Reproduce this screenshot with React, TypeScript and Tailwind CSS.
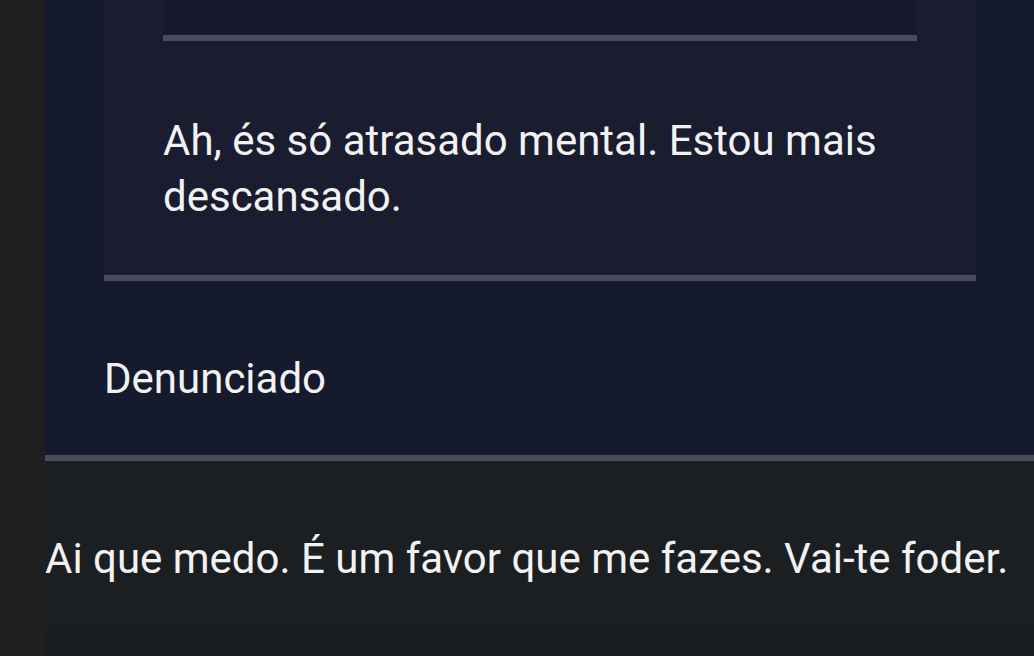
export default function App() {
  const font = { fontFamily: "Roboto, 'Noto Sans', sans-serif" };
  return (
    <div className="flex w-[1034px] h-[656px] overflow-hidden bg-[#1f1f1f] text-[#f2f2f2]" style={font}>
      <div className="w-[45px] shrink-0" />
      <div className="flex-1 flex flex-col">
        <div className="bg-[#161a2d] border-b-[6px] border-[#4b4b5c] pl-[59px] pr-[58px] pb-[48px]">
          <div className="bg-[#1a1c2f] border-b-[6px] border-[#4b4b5c] pb-[50px]">
            <div className="ml-[59px] mr-[59px] h-[41px] bg-[#171a2c] border-b-[6px] border-[#4b4b5c]" />
            <p className="ml-[59px] mr-[40px] mt-[72px] text-[42px] leading-[56px]">
              Ah, és só atrasado mental. Estou mais descansado.
            </p>
          </div>
          <p className="mt-[70px] text-[42px] leading-[56px]">Denunciado</p>
        </div>
        <div className="bg-[#1c1f22] pt-[70px] h-[166px]">
          <p className="text-[42px] leading-[56px] whitespace-nowrap">
            Ai que medo. É um favor que me fazes. Vai-te foder.
          </p>
        </div>
        <div className="flex-1 bg-[#1b1e21]" />
      </div>
    </div>
  );
}
